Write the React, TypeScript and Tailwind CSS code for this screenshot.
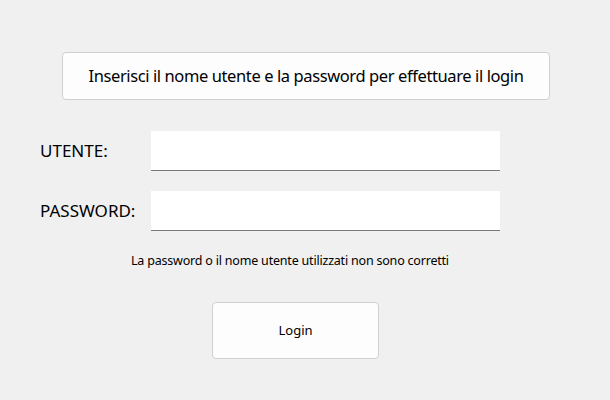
import React, { useState } from 'react';

const App: React.FC = () => {
  const [user, setUser] = useState('');
  const [password, setPassword] = useState('');

  return (
    <div
      className="w-[610px] h-[400px] bg-[#f0f0f0] text-black flex flex-col overflow-hidden"
      style={{ fontFamily: '"Noto Sans", "Open Sans", sans-serif' }}
    >
      {/* Header message */}
      <div className="ml-[62px] mt-[52px] w-[488px] h-[48px] flex items-center justify-center bg-[#fdfdfd] border border-[#d0d0d0] rounded-[4px] text-[16.5px] tracking-[-0.4px]">
        Inserisci il nome utente e la password per effettuare il login
      </div>

      {/* Form fields */}
      <div className="mt-[31px] flex flex-col gap-[20px]">
        <div className="flex items-center h-[40px]">
          <label className="w-[151px] shrink-0 pl-[40px] text-[17px]">UTENTE:</label>
          <input
            type="text"
            value={user}
            onChange={(e) => setUser(e.target.value)}
            className="w-[349px] h-[40px] bg-white border-b border-[#7a7a7a] outline-none px-2 text-[15px]"
          />
        </div>
        <div className="flex items-center h-[40px]">
          <label className="w-[151px] shrink-0 pl-[40px] text-[17px]">PASSWORD:</label>
          <input
            type="password"
            value={password}
            onChange={(e) => setPassword(e.target.value)}
            className="w-[349px] h-[40px] bg-white border-b border-[#7a7a7a] outline-none px-2 text-[15px]"
          />
        </div>
      </div>

      {/* Error message */}
      <p className="ml-[131px] mt-[21px] text-[12.5px] tracking-[-0.2px] leading-[18px]">
        La password o il nome utente utilizzati non sono corretti
      </p>

      {/* Login button */}
      <button className="ml-[212px] mt-[32px] w-[167px] h-[57px] bg-[#fdfdfd] border border-[#d0d0d0] rounded-[4px] text-[13px]">
        Login
      </button>
    </div>
  );
};

export default App;
